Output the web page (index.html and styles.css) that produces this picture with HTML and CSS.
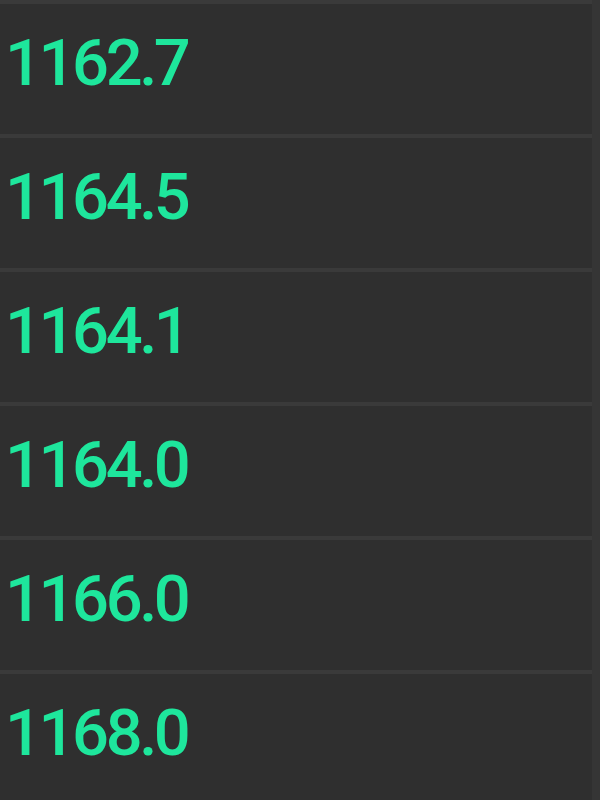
FILE: index.html
```html
<!DOCTYPE html>
<html>
<head>
<meta charset="utf-8">
<link rel="stylesheet" href="styles.css">
</head>
<body>
<div class="table">
  <div class="row"><span class="price">1162.7</span></div>
  <div class="row"><span class="price">1164.5</span></div>
  <div class="row"><span class="price">1164.1</span></div>
  <div class="row"><span class="price">1164.0</span></div>
  <div class="row"><span class="price">1166.0</span></div>
  <div class="row"><span class="price">1168.0</span></div>
</div>
</body>
</html>
```
FILE: styles.css
```css
html, body {
  margin: 0;
  padding: 0;
  background: #2f2f2f;
  overflow: hidden;
}
.table {
  width: 600px;
  height: 800px;
  background: #2f2f2f;
  border-right: 8px solid #353535;
  box-sizing: border-box;
  overflow: hidden;
}
.row {
  height: 134px;
  box-sizing: border-box;
  border-top: 4px solid #3a3a3a;
  padding: 0 0 12px 5px;
  line-height: 118px;
}
.price {
  font-family: Roboto, "Liberation Sans", sans-serif;
  font-size: 65px;
  font-weight: 500;
  letter-spacing: -3.4px;
  color: #1ee69c;
}
```
